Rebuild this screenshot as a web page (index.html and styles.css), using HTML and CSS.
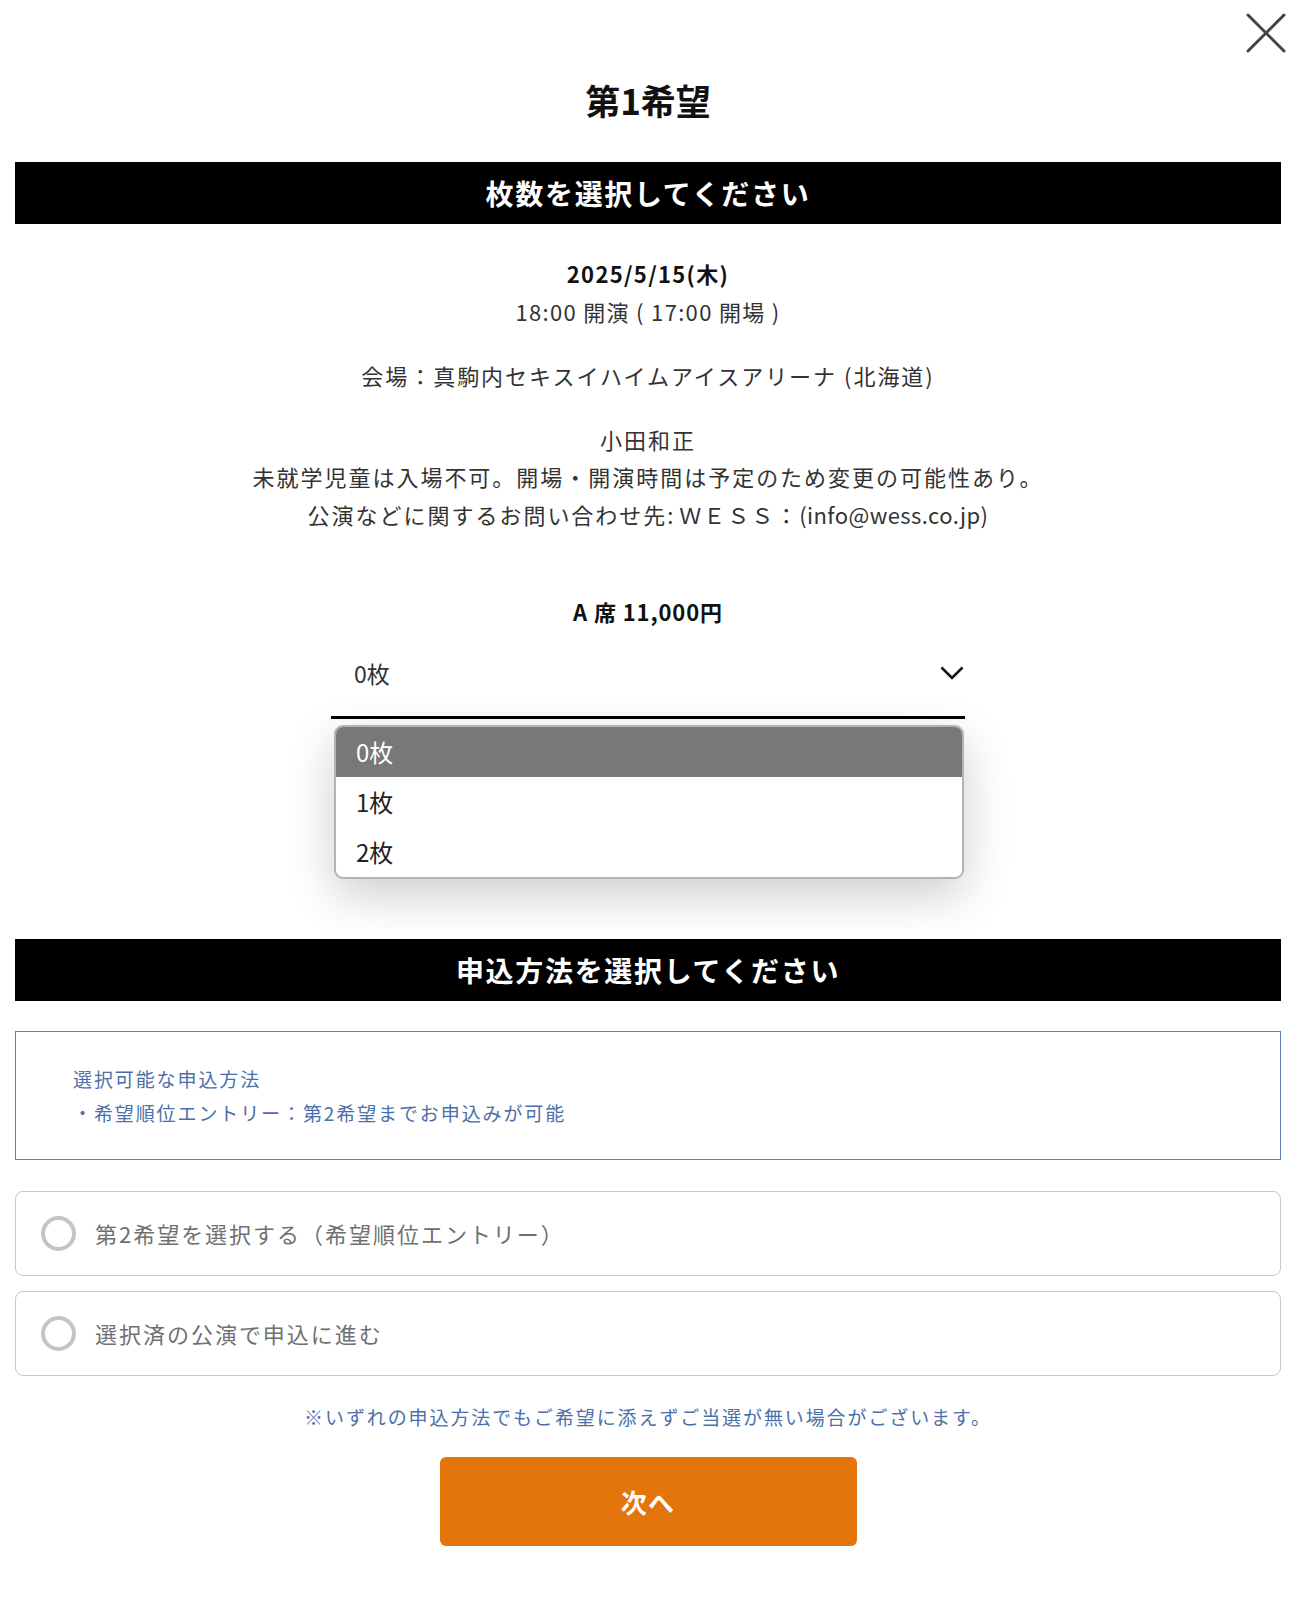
FILE: index.html
```html
<!DOCTYPE html>
<html lang="ja">
<head>
<meta charset="utf-8">
<title>第1希望</title>
<link rel="stylesheet" href="styles.css">
</head>
<body>
<div class="modal">
  <button class="close" aria-label="閉じる">
    <svg width="40" height="40" viewBox="0 0 40 40"><path d="M2 2 L38 38 M38 2 L2 38" stroke="#444" stroke-width="3" fill="none" stroke-linecap="round"/></svg>
  </button>
  <h1 class="title">第1希望</h1>
  <h2 class="bar">枚数を選択してください</h2>

  <div class="info">
    <p class="date">2025/5/15(木)</p>
    <p class="time">18:00 開演 ( 17:00 開場 )</p>
    <p class="venue">会場：真駒内セキスイハイムアイスアリーナ (北海道)</p>
    <p class="notes">小田和正<br>未就学児童は入場不可。開場・開演時間は予定のため変更の可能性あり。<br>公演などに関するお問い合わせ先<span class="latin">: </span>ＷＥＳＳ：<span class="latin">(info@wess.co.jp)</span></p>
  </div>

  <p class="seat">A 席 11,000円</p>
  <div class="select-wrap">
    <div class="select">
      <span class="select-value">0枚</span>
      <svg class="chevron" width="24" height="14" viewBox="0 0 24 14"><path d="M1.5 1.5 L12 12 L22.5 1.5" stroke="#111" stroke-width="2.6" fill="none"/></svg>
    </div>
    <ul class="dropdown">
      <li class="opt selected">0枚</li>
      <li class="opt">1枚</li>
      <li class="opt">2枚</li>
    </ul>
  </div>

  <h2 class="bar bar2">申込方法を選択してください</h2>

  <div class="method-box">
    <p>選択可能な申込方法</p>
    <p>・希望順位エントリー：第2希望までお申込みが可能</p>
  </div>

  <label class="radio-card first">
    <span class="radio"></span>
    <span class="radio-label">第2希望を選択する（希望順位エントリー）</span>
  </label>
  <label class="radio-card">
    <span class="radio"></span>
    <span class="radio-label">選択済の公演で申込に進む</span>
  </label>

  <p class="note">※いずれの申込方法でもご希望に添えずご当選が無い場合がございます。</p>

  <div class="actions">
    <button class="next">次へ</button>
  </div>
</div>
</body>
</html>
```

FILE: styles.css
```css
* { box-sizing: border-box; }
html, body { margin: 0; padding: 0; background: #fff; }
body {
  font-family: "Noto Sans CJK JP", "Noto Sans", sans-serif;
  color: #333;
}
p, h1, h2, ul { margin: 0; padding: 0; }

.modal {
  position: relative;
  padding: 76px 12px 80px 15px;
}

.close {
  position: absolute;
  top: 13px;
  right: 7px;
  width: 40px;
  height: 40px;
  padding: 0;
  border: 0;
  background: none;
}
.close svg { display: block; }

.title {
  line-height: 48px;
  font-size: 35px;
  font-weight: 700;
  color: #111;
  text-align: center;
}

.bar {
  margin-top: 38px;
  height: 62px;
  line-height: 62px;
  background: #000;
  color: #fff;
  font-size: 28px;
  font-weight: 700;
  letter-spacing: 0.06em;
  text-align: center;
}

.info {
  margin-top: 31px;
  text-align: center;
  font-size: 22px;
  line-height: 37.5px;
  letter-spacing: 0.09em;
  color: #333;
}
.date { font-weight: 700; color: #111; letter-spacing: 0.06em; }
.time { letter-spacing: 0.06em; }
.venue { margin-top: 27px; }
.notes { margin-top: 26px; }
.latin { letter-spacing: 0.02em; }

.seat {
  margin-top: 60px;
  text-align: center;
  font-size: 22px;
  font-weight: 700;
  line-height: 37.5px;
  letter-spacing: 0.04em;
  color: #111;
}

.select-wrap {
  position: relative;
  width: 634px;
  margin: 0 auto;
}
.select {
  display: flex;
  align-items: center;
  justify-content: space-between;
  height: 88px;
  padding: 0 1px 0 23px;
  border-bottom: 3px solid #000;
  font-size: 23px;
  color: #333;
}
.chevron { display: block; }

.dropdown {
  position: absolute;
  top: 94px;
  left: 3px;
  width: 630px;
  list-style: none;
  background: #fff;
  border: 2px solid #b3b3b3;
  border-radius: 9px;
  overflow: hidden;
  box-shadow: 0 16px 48px rgba(0, 0, 0, 0.2);
  z-index: 2;
}
.opt {
  height: 50px;
  line-height: 50px;
  padding-left: 20px;
  font-size: 24px;
  color: #222;
}
.opt.selected {
  background: #787878;
  color: #fff;
}

.bar2 { margin-top: 220px; }

.method-box {
  margin-top: 30px;
  border: 1px solid #5a7db3;
  padding: 30px 20px 29px 57px;
  font-size: 19px;
  line-height: 34px;
  letter-spacing: 0.1em;
  color: #4a70aa;
}

.radio-card {
  display: flex;
  align-items: center;
  height: 85px;
  margin-top: 15px;
  padding-left: 25px;
  border: 1px solid #c8c8c8;
  border-radius: 8px;
  font-size: 22px;
  letter-spacing: 0.09em;
  color: #707070;
}
.radio-card.first { margin-top: 31px; }
.radio {
  width: 35px;
  height: 35px;
  flex: none;
  border: 4px solid #c4c4c4;
  border-radius: 50%;
  margin-right: 19px;
}

.note {
  margin-top: 24px;
  text-align: center;
  font-size: 19px;
  line-height: 34px;
  letter-spacing: 0.1em;
  color: #4a70aa;
}

.actions {
  display: flex;
  justify-content: center;
  margin-top: 23px;
}
.next {
  width: 417px;
  height: 89px;
  border: 0;
  border-radius: 6px;
  background: #e4740c;
  color: #fff;
  font-family: inherit;
  font-size: 26px;
  font-weight: 700;
  letter-spacing: 0.05em;
}
```
